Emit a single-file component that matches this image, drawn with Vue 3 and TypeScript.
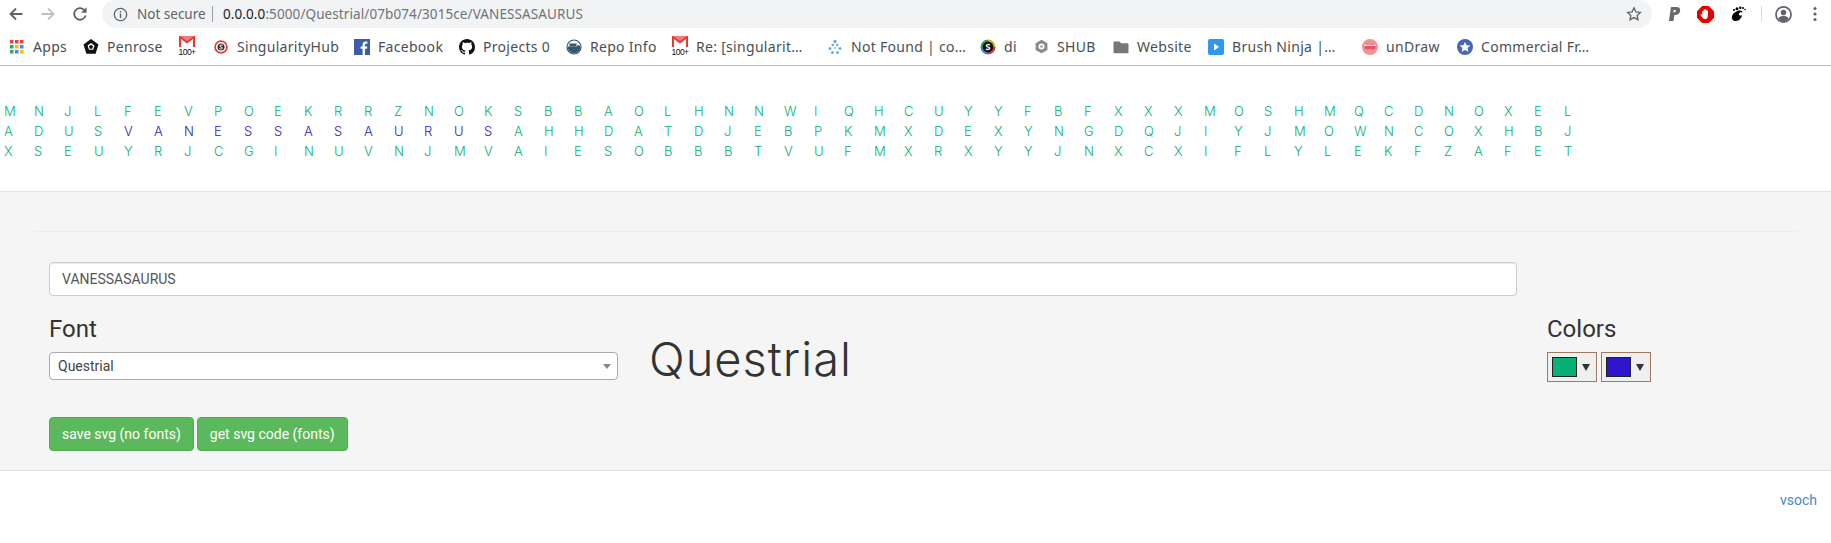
<script setup lang="ts">
const rows: string[] = [
    'MNJLFEVPOEKRRZNOKSBBAOLHNNWIQHCUYYFBFXXXMOSHMQCDNOXEL',
    'ADUSVANESSASAURUSAHHDATDJEBPKMXDEXYNGDQJIYJMOWNCOXHBJ',
    'XSEUYRJCGINUVNJMVAIESOBBBTVUFMXRXYYJNXCXIFLYLEKFZAFET',
];

// the word sits in the middle row, everything else is noise
function isWord(row: number, col: number): boolean {
    return row === 1 && col >= 4 && col <= 16;
}

interface Bookmark {
    label: string;
    icon: string;
    width: number;
}

const bookmarks: Bookmark[] = [
    { label: 'Apps', icon: 'apps', width: 74 },
    { label: 'Penrose', icon: 'penrose', width: 96 },
    { label: '', icon: 'gmail', width: 34 },
    { label: 'SingularityHub', icon: 'singularity', width: 141 },
    { label: 'Facebook', icon: 'facebook', width: 105 },
    { label: 'Projects 0', icon: 'github', width: 107 },
    { label: 'Repo Info', icon: 'docker', width: 106 },
    { label: 'Re: [singularit…', icon: 'gmail', width: 155 },
    { label: 'Not Found | co…', icon: 'dots', width: 153 },
    { label: 'di', icon: 'di', width: 53 },
    { label: 'SHUB', icon: 'shub', width: 80 },
    { label: 'Website', icon: 'folder', width: 95 },
    { label: 'Brush Ninja |…', icon: 'brush', width: 154 },
    { label: 'unDraw', icon: 'undraw', width: 95 },
    { label: 'Commercial Fr…', icon: 'star', width: 150 },
];

const swatches: string[] = ['#07b074', '#3015ce'];
</script>

<template>
    <div class="page">
        <header class="chrome">
            <div class="toolbar">
                <svg class="nav" viewBox="0 0 16 16" width="16" height="16">
                    <path d="M14.5 8H2.5M8 2.5 2.5 8 8 13.5" fill="none" stroke="#5f6368" stroke-width="1.8" />
                </svg>
                <svg class="nav" viewBox="0 0 16 16" width="16" height="16">
                    <path d="M1.5 8h12M8 2.5 13.5 8 8 13.5" fill="none" stroke="#bdc1c6" stroke-width="1.8" />
                </svg>
                <svg class="nav" viewBox="0 0 16 16" width="16" height="16">
                    <path d="M13.6 9.5A5.8 5.8 0 1 1 12.2 3.9" fill="none" stroke="#5f6368" stroke-width="1.8" />
                    <path d="M14.6 1.2v5.6H9z" fill="#5f6368" />
                </svg>
                <div class="omnibox">
                    <svg viewBox="0 0 16 16" width="15" height="15">
                        <circle cx="8" cy="8" r="6.6" fill="none" stroke="#5f6368" stroke-width="1.4" />
                        <path d="M8 7v4.6M8 4.2v1.6" stroke="#5f6368" stroke-width="1.5" />
                    </svg>
                    <span class="secure">Not secure</span>
                    <span class="bar"></span>
                    <span class="url"><b>0.0.0.0</b>:5000/Questrial/07b074/3015ce/VANESSASAURUS</span>
                    <svg class="star" viewBox="0 0 16 16" width="16" height="16">
                        <path d="M8 1.8l1.9 4.1 4.5.5-3.3 3 .9 4.4L8 11.6l-4 2.2.9-4.4-3.3-3 4.5-.5z" fill="none"
                            stroke="#5f6368" stroke-width="1.3" />
                    </svg>
                </div>
                <div class="extensions">
                    <svg viewBox="0 0 16 18" width="14" height="16">
                        <path d="M4.5 1h6.500c3 0 4.500 1.700 4 4.500-.5 3-2.800 4.500-5.500 4.500H8.400L7.400 17H2.200z" fill="#6b6b6b" />
                        <path d="M7.700 4.500 7.200 7h1.200c1 0 1.700-.4 1.800-1.300.1-.8-.4-1.200-1.300-1.200z" fill="#fff" />
                    </svg>
                    <svg viewBox="0 0 18 18" width="17" height="17">
                        <path d="M5.500 0h7L18 5.500v7L12.500 18h-7L0 12.500v-7z" fill="#e60000" />
                        <path d="M5.500 9V5.500a.8.8 0 0 1 1.500 0V4a.8.8 0 0 1 1.500 0a.8.8 0 0 1 1.500 0v1a.8.8 0 0 1 1.500 0v5.500c0 2-1 3.500-3 3.500-1.500 0-2.300-.8-3-2L4 10c-.5-.9.6-1.600 1.500-1z" fill="#fff" />
                    </svg>
                    <svg viewBox="0 0 16 16" width="16" height="16">
                        <path d="M7.500 5c3-1 5 0 5 1.500-1.500-.6-3-.3-3.500 1-.5 1.600 1 2.500 3 1.800-.5 3-3 5.700-6 5.700-3 0-4.500-2-4-4.500.4-2.500 2.500-4.500 5.500-5.500z" fill="#000" />
                        <circle cx="7" cy="2.800" r="1.500" fill="#000" />
                        <circle cx="10.300" cy="1.800" r="1.200" fill="#000" />
                        <circle cx="13" cy="2" r="1" fill="#000" />
                        <circle cx="15" cy="3.500" r=".8" fill="#000" />
                        <circle cx="4" cy="4" r="1.100" fill="#000" />
                    </svg>
                    <span class="ext-bar"></span>
                    <svg viewBox="0 0 18 18" width="17" height="17">
                        <circle cx="9" cy="9" r="8" fill="none" stroke="#5f6368" stroke-width="1.800" />
                        <circle cx="9" cy="7" r="2.900" fill="#5f6368" />
                        <path d="M3.500 13.500c1-2.500 3.500-3.200 5.500-3.200s4.500.7 5.500 3.200A7 7 0 0 1 9 16.300a7 7 0 0 1-5.500-2.800z" fill="#5f6368" />
                    </svg>
                    <svg class="menu" viewBox="0 0 4 16" width="4" height="16">
                        <circle cx="2" cy="2.500" r="1.600" fill="#5f6368" />
                        <circle cx="2" cy="8" r="1.600" fill="#5f6368" />
                        <circle cx="2" cy="13.500" r="1.600" fill="#5f6368" />
                    </svg>
                </div>
            </div>
            <nav class="bookmarks">
                <div v-for="(b, i) in bookmarks" :key="i" class="bookmark" :style="{ width: b.width + 'px' }">
                    <span class="favicon">
                        <svg v-if="b.icon === 'apps'" viewBox="0 0 14 14" width="14" height="14">
                            <path d="M0 0h3.500v3.500H0z" fill="#ea4335" /><path d="M5 0h3.500v3.500H5z" fill="#ea4335" /><path d="M10 0h3.500v3.500H10z" fill="#ea4335" />
                            <path d="M0 5h3.500v3.500H0z" fill="#34a853" /><path d="M5 5h3.500v3.500H5z" fill="#fbbc05" /><path d="M10 5h3.500v3.500H10z" fill="#4285f4" />
                            <path d="M0 10h3.500v3.500H0z" fill="#34a853" /><path d="M5 10h3.500v3.500H5z" fill="#4285f4" /><path d="M10 10h3.500v3.500H10z" fill="#fbbc05" />
                        </svg>
                        <svg v-else-if="b.icon === 'penrose'" viewBox="0 0 16 16" width="17" height="17">
                            <path d="M8 .5l7.500 5.600-2.900 9.200H3.400L.5 6.100z" fill="#111" />
                            <path d="M8 4.500l3.500 2.600-1.300 4.200H5.800L4.500 7.100z" fill="#fff" />
                            <path d="M8 6.300 10 7.800 9.200 10.200H6.800L6 7.800zM4.500 7.100l1.700 5.800h-1.500L3 7zM11.500 7.100 8.800 3.400l1.400-.5 2.900 4z" fill="#111" />
                        </svg>
                        <span v-else-if="b.icon === 'gmail'" class="gmail">
                            <svg viewBox="0 0 16 11" width="16" height="11">
                                <path d="M0 0h16v11H0z" fill="#e53935" />
                                <path d="M2 11V3L8 7.500 14 3v8z" fill="#fff" />
                                <path d="M1 0l7 5 7-5z" fill="#fff" opacity=".35" />
                            </svg>
                            <small>100+</small>
                        </span>
                        <svg v-else-if="b.icon === 'singularity'" viewBox="0 0 16 16" width="14" height="14">
                            <circle cx="8" cy="8" r="6.800" fill="#fff" stroke="#e0423c" stroke-width="2" />
                            <circle cx="8" cy="8" r="4" fill="#2b2b2b" />
                            <path d="M10 6.200C9 5.400 6.500 5.500 6.500 6.900c0 1.500 3.200.8 3.200 2.300 0 1.300-2.500 1.400-3.700.6" fill="none" stroke="#fff" stroke-width="1.100" />
                        </svg>
                        <svg v-else-if="b.icon === 'facebook'" viewBox="0 0 16 16" width="16" height="16">
                            <path d="M0 0h16v16H0z" fill="#3b5ea8" />
                            <path d="M11 16V9.800h2l.3-2.400H11V5.900c0-.7.2-1.200 1.200-1.200h1.200V2.500c-.2 0-.9-.1-1.800-.1-1.800 0-3 1.100-3 3.100v1.900H6.600v2.400h2V16z" fill="#fff" />
                        </svg>
                        <svg v-else-if="b.icon === 'github'" viewBox="0 0 16 16" width="16" height="16">
                            <path d="M8 0C3.580 0 0 3.580 0 8c0 3.540 2.290 6.530 5.470 7.590.4.070.55-.17.55-.38 0-.19-.01-.82-.01-1.490-2.010.37-2.530-.49-2.690-.94-.09-.23-.48-.94-.82-1.130-.28-.15-.68-.52-.01-.53.630-.01 1.080.58 1.230.82.720 1.210 1.870.87 2.330.66.070-.52.280-.87.510-1.070-1.780-.2-3.640-.89-3.640-3.950 0-.87.310-1.590.820-2.150-.08-.2-.36-1.020.080-2.120 0 0 .67-.21 2.200.82.640-.18 1.320-.27 2-.27.680 0 1.360.09 2 .27 1.530-1.040 2.200-.82 2.200-.82.440 1.100.160 1.920.080 2.120.510.560.820 1.270.820 2.150 0 3.070-1.870 3.750-3.650 3.950.290.250.540.730.540 1.480 0 1.070-.01 1.930-.01 2.200 0 .21.150.46.550.38A8.013 8.013 0 0 0 16 8c0-4.420-3.580-8-8-8z" fill="#111" />
                        </svg>
                        <svg v-else-if="b.icon === 'docker'" viewBox="0 0 16 16" width="16" height="16">
                            <circle cx="8" cy="8" r="7" fill="#fff" stroke="#34566e" stroke-width="1.200" />
                            <path d="M1.800 7.500h9c.3-1 1.200-1.400 2-1.200l1.500.8A6.300 6.300 0 0 1 8 14.300 6.300 6.300 0 0 1 1.800 7.500z" fill="#34566e" />
                            <path d="M3.500 4.500h7v3h-7z" fill="#34566e" />
                        </svg>
                        <svg v-else-if="b.icon === 'dots'" viewBox="0 0 16 16" width="16" height="16">
                            <g fill="#6aaed6">
                                <circle cx="8" cy="2.500" r="1.700" /><circle cx="5.800" cy="6" r="1.300" /><circle cx="10.200" cy="6" r="1.300" />
                                <circle cx="3" cy="9.500" r="1.500" /><circle cx="13" cy="9.500" r="1.500" /><circle cx="8" cy="9" r=".9" />
                                <circle cx="5.500" cy="13.500" r="1.500" /><circle cx="10.500" cy="13.500" r="1.500" />
                            </g>
                        </svg>
                        <svg v-else-if="b.icon === 'di'" viewBox="0 0 16 16" width="16" height="16">
                            <path d="M8 .5A7.500 7.500 0 0 1 15.500 8H13a5 5 0 0 0-5-5z" fill="#d9b400" />
                            <path d="M15.500 8A7.500 7.500 0 0 1 8 15.500V13a5 5 0 0 0 5-5z" fill="#d23c3c" />
                            <path d="M8 15.500A7.500 7.500 0 0 1 .5 8H3a5 5 0 0 0 5 5z" fill="#3f7fd0" />
                            <path d="M.5 8A7.500 7.500 0 0 1 8 .5V3a5 5 0 0 0-5 5z" fill="#2e9e5b" />
                            <circle cx="8" cy="8" r="5.400" fill="#111" />
                            <path d="M10 6.100C9 5.200 6.300 5.300 6.300 6.800c0 1.600 3.500.9 3.500 2.500 0 1.400-2.700 1.500-3.900.6" fill="none" stroke="#fff" stroke-width="1.300" />
                        </svg>
                        <svg v-else-if="b.icon === 'shub'" viewBox="0 0 16 16" width="15" height="15">
                            <path d="M8 .8l6.300 3.600v7.200L8 15.200l-6.300-3.600V4.400z" fill="#8a8a8a" />
                            <circle cx="8" cy="8" r="3.200" fill="#fff" />
                            <circle cx="8" cy="8" r="1.400" fill="#a0a0a0" />
                        </svg>
                        <svg v-else-if="b.icon === 'folder'" viewBox="0 0 16 16" width="16" height="16">
                            <path d="M1.500 2.500h5l1.700 1.800h6.300c.6 0 1 .4 1 1v8c0 .6-.4 1-1 1h-13c-.6 0-1-.4-1-1v-9.800c0-.6.400-1 1-1z" fill="#75787b" />
                        </svg>
                        <svg v-else-if="b.icon === 'brush'" viewBox="0 0 16 16" width="16" height="16">
                            <rect width="16" height="16" rx="2" fill="#2f97ee" />
                            <path d="M6 4.500 11 8l-5 3.500z" fill="#fff" />
                        </svg>
                        <svg v-else-if="b.icon === 'undraw'" viewBox="0 0 16 16" width="16" height="16">
                            <circle cx="8" cy="8" r="8" fill="#f3938b" />
                            <circle cx="5.500" cy="7.500" r="3" fill="#e4526f" />
                            <circle cx="10.500" cy="7.500" r="3" fill="#e4526f" />
                            <path d="M2 5.500h12v1.500H2z" fill="#fbd3cf" />
                        </svg>
                        <svg v-else viewBox="0 0 16 16" width="16" height="16">
                            <circle cx="8" cy="8" r="8" fill="#4667b4" />
                            <path d="M8 2.800l1.600 3.400 3.700.4-2.700 2.500.7 3.700L8 11l-3.300 1.800.7-3.700-2.700-2.500 3.700-.4z" fill="#fff" />
                        </svg>
                    </span>
                    <span v-if="b.label" class="bookmark-label">{{ b.label }}</span>
                </div>
            </nav>
        </header>

        <section class="letters">
            <div v-for="(row, r) in rows" :key="r" class="letter-row">
                <span v-for="(ch, c) in row" :key="c" class="letter" :class="{ word: isWord(r, c) }">{{ ch }}</span>
            </div>
        </section>

        <section class="well">
            <hr>
            <div class="form">
                <input class="text-input" type="text" value="VANESSASAURUS">
                <div class="controls">
                    <div class="font-col">
                        <h3>Font</h3>
                        <div class="select-wrap">
                            <select class="font-select">
                                <option>Questrial</option>
                            </select>
                        </div>
                    </div>
                    <div class="preview">Questrial</div>
                    <div class="color-col">
                        <h3>Colors</h3>
                        <div class="pickers">
                            <button v-for="color in swatches" :key="color" class="picker" type="button">
                                <span class="swatch" :style="{ background: color }"></span>
                                <span class="caret"></span>
                            </button>
                        </div>
                    </div>
                </div>
                <div class="actions">
                    <button class="btn" type="button">save svg (no fonts)</button>
                    <button class="btn" type="button">get svg code (fonts)</button>
                </div>
            </div>
        </section>

        <footer class="foot">
            <a class="credit" href="#">vsoch</a>
        </footer>
    </div>
</template>

<style>
html,
body {
    margin: 0;
    background: #fff;
    overflow: hidden;
}
</style>

<style scoped>
.page {
    width: 1831px;
    height: 543px;
    font: 14px Roboto, Arial, sans-serif;
    color: #333;
}

.chrome {
    height: 65px;
    border-bottom: 1px solid #b8b8b8;
    font-family: "Noto Sans", sans-serif;
    color: #5f6368;
}

.toolbar {
    display: flex;
    align-items: center;
    height: 28px;
    padding-left: 8px;
}

.nav {
    flex: none;
    margin-right: 16px;
}

.omnibox {
    flex: none;
    display: flex;
    align-items: center;
    width: 1550px;
    height: 28px;
    margin-left: -2px;
    padding-left: 11px;
    box-sizing: border-box;
    background: #f1f3f4;
    border-radius: 14px;
    font-size: 13.5px;
}

.secure {
    margin-left: 9px;
    width: 68px;
    white-space: nowrap;
}

.bar {
    width: 1px;
    height: 16px;
    margin: 0 10px 0 7px;
    background: #9aa0a6;
}

.url {
    white-space: nowrap;
    color: #6f7478;
    letter-spacing: 0.007em;
}

.url b {
    font-weight: 400;
    color: #202124;
}

.star {
    margin-left: auto;
    margin-right: 10px;
}

.extensions {
    flex: 1;
    display: flex;
    align-items: center;
    padding-left: 15px;
    gap: 16px;
}

.ext-bar {
    width: 1px;
    height: 16px;
    background: #dadce0;
    margin: 0 -3px 0 -1px;
}

.menu {
    margin-left: 5px;
}

.bookmarks {
    display: flex;
    align-items: center;
    height: 37px;
    padding-left: 9px;
}

.bookmark {
    flex: none;
    display: flex;
    align-items: center;
    gap: 8px;
    font-size: 14px;
    letter-spacing: 0.3px;
    white-space: nowrap;
    color: #4a4f54;
}

.favicon {
    display: flex;
    align-items: center;
    justify-content: center;
    width: 16px;
    height: 16px;
}

.gmail {
    display: flex;
    flex-direction: column;
    align-items: center;
    line-height: 7px;
}

.gmail small {
    font: 8.5px "Liberation Sans", sans-serif;
    color: #111;
    letter-spacing: -0.5px;
}

.letters {
    display: flex;
    flex-direction: column;
    height: 125px;
    padding: 35px 0 0 4px;
    box-sizing: border-box;
}

.letter-row {
    display: flex;
    height: 20px;
    align-items: center;
}

.letter {
    flex: none;
    width: 30px;
    font: 300 13px Inter, sans-serif;
    color: #07b074;
}

.letter.word {
    color: #3015ce;
}

.well {
    height: 280px;
    padding: 40px 34px 0;
    box-sizing: border-box;
    background: #f5f5f5;
    border-bottom: 1px solid #e3e3e3;
    box-shadow: inset 0 2px 2px -2px rgba(0, 0, 0, 0.25);
}

hr {
    margin: 0;
    border: 0;
    border-top: 1px solid #eee;
}

.form {
    padding: 30px 0 0 15px;
}

.text-input {
    display: block;
    width: 1468px;
    height: 34px;
    padding: 0 12px;
    box-sizing: border-box;
    border: 1px solid #ccc;
    border-radius: 4px;
    background: #fff;
    font: 14px Roboto, sans-serif;
    color: #555;
    box-shadow: inset 0 1px 1px rgba(0, 0, 0, 0.075);
}

.controls {
    display: flex;
    margin-top: 20px;
}

h3 {
    margin: 0;
    font: 400 24px/26px Roboto, sans-serif;
    color: #333;
}

.font-col {
    flex: none;
    width: 569px;
}

.select-wrap {
    position: relative;
    margin-top: 10px;
}

.select-wrap::after {
    content: "";
    position: absolute;
    top: 12px;
    right: 7px;
    border: 4px solid transparent;
    border-top: 5px solid #888;
    border-bottom: 0;
}

.font-select {
    display: block;
    width: 100%;
    height: 28px;
    padding: 0 8px;
    box-sizing: border-box;
    appearance: none;
    border: 1px solid #aaa;
    border-radius: 4px;
    background: #fff;
    font: 14px Roboto, sans-serif;
    color: #444;
}

.preview {
    flex: none;
    width: 898px;
    margin-left: 31px;
    padding-top: 19px;
    font: 300 47px/47px Inter, sans-serif;
    letter-spacing: 1px;
    color: #333;
}

.color-col {
    flex: none;
}

.pickers {
    display: flex;
    gap: 4px;
    margin-top: 10px;
}

.picker {
    display: flex;
    align-items: center;
    width: 50px;
    height: 30px;
    padding: 0 0 0 4px;
    box-sizing: border-box;
    border: 1px solid #a07a5f;
    background: #efefef;
}

.swatch {
    width: 25px;
    height: 20px;
    box-sizing: border-box;
    border: 1px solid #222;
}

.caret {
    margin-left: 5px;
    border: 4px solid transparent;
    border-top: 7px solid #333;
    border-bottom: 0;
}

.actions {
    display: flex;
    gap: 3px;
    margin-top: 35px;
}

.btn {
    height: 34px;
    padding: 0 12px;
    border: 1px solid #4cae4c;
    border-radius: 4px;
    background: #5cb85c;
    font: 14px Roboto, sans-serif;
    color: #fff;
}

.foot {
    display: flex;
    justify-content: flex-end;
    padding: 21px 14px 0 0;
}

.credit {
    color: #428bca;
    text-decoration: none;
}
</style>
